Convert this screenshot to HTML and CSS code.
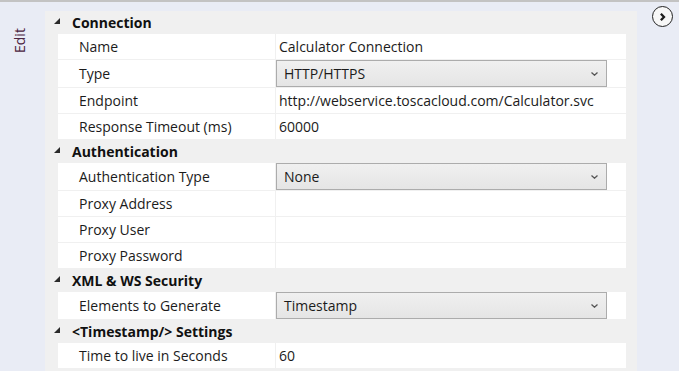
FILE: index.html
```html
<!DOCTYPE html>
<html lang="en">

<head>
  <meta charset="UTF-8">
  <meta name="viewport" content="width=device-width, initial-scale=1.0">
  <title>Edit - Calculator Connection</title>
  <link rel="stylesheet" href="styles.css">
</head>

<body>
  <div class="shell">
    <aside class="side-tab">
      <span class="side-label">Edit</span>
    </aside>

    <main class="grid-panel">
      <section class="group">
        <div class="group-head"><svg class="caret" viewBox="0 0 6 6"><polygon points="6,0 6,6 0,6" /></svg>Connection</div>
        <div class="prop">
          <div class="prop-name">Name</div>
          <div class="prop-value">Calculator Connection</div>
        </div>
        <div class="prop prop-combo">
          <div class="prop-name">Type</div>
          <div class="prop-value">
            <div class="combo">HTTP/HTTPS<svg class="chev" viewBox="0 0 7 4"><polyline points="0.5,0.5 3.5,3.2 6.5,0.5" /></svg></div>
          </div>
        </div>
        <div class="prop">
          <div class="prop-name">Endpoint</div>
          <div class="prop-value">http://webservice.toscacloud.com/Calculator.svc</div>
        </div>
        <div class="prop">
          <div class="prop-name">Response Timeout (ms)</div>
          <div class="prop-value">60000</div>
        </div>
      </section>

      <section class="group">
        <div class="group-head"><svg class="caret" viewBox="0 0 6 6"><polygon points="6,0 6,6 0,6" /></svg>Authentication</div>
        <div class="prop prop-combo">
          <div class="prop-name">Authentication Type</div>
          <div class="prop-value">
            <div class="combo">None<svg class="chev" viewBox="0 0 7 4"><polyline points="0.5,0.5 3.5,3.2 6.5,0.5" /></svg></div>
          </div>
        </div>
        <div class="prop">
          <div class="prop-name">Proxy Address</div>
          <div class="prop-value"></div>
        </div>
        <div class="prop">
          <div class="prop-name">Proxy User</div>
          <div class="prop-value"></div>
        </div>
        <div class="prop">
          <div class="prop-name">Proxy Password</div>
          <div class="prop-value"></div>
        </div>
      </section>

      <section class="group">
        <div class="group-head"><svg class="caret" viewBox="0 0 6 6"><polygon points="6,0 6,6 0,6" /></svg>XML &amp; WS Security</div>
        <div class="prop prop-combo">
          <div class="prop-name">Elements to Generate</div>
          <div class="prop-value">
            <div class="combo">Timestamp<svg class="chev" viewBox="0 0 7 4"><polyline points="0.5,0.5 3.5,3.2 6.5,0.5" /></svg></div>
          </div>
        </div>
      </section>

      <section class="group">
        <div class="group-head"><svg class="caret" viewBox="0 0 6 6"><polygon points="6,0 6,6 0,6" /></svg>&lt;Timestamp/&gt; Settings</div>
        <div class="prop">
          <div class="prop-name">Time to live in Seconds</div>
          <div class="prop-value">60</div>
        </div>
      </section>
    </main>

    <aside class="right-rail">
      <button class="collapse-btn" type="button">
        <svg viewBox="0 0 20 20"><polyline points="8.3,6.5 11.6,10 8.3,13.5" /></svg>
      </button>
    </aside>
  </div>
</body>

</html>
```

FILE: styles.css
```css
html,
body {
  margin: 0;
  height: 100%;
}

body {
  font-family: 'Open Sans', 'Noto Sans', sans-serif;
  font-size: 14px;
  color: #1b1b1b;
  background-color: #e9ecf5;
  overflow: hidden;
}

.shell {
  display: flex;
  height: 100%;
  box-sizing: border-box;
  border-top: 2px solid #c3c3c3;
}

/* left vertical tab */
.side-tab {
  width: 45px;
  flex-shrink: 0;
  display: flex;
  justify-content: center;
  padding-top: 21px;
  padding-right: 6px;
  box-sizing: border-box;
}

.side-label {
  writing-mode: vertical-rl;
  transform: rotate(180deg);
  color: #4b2440;
  font-size: 14px;
  height: 30px;
}

/* property grid */
.grid-panel {
  width: 592px;
  flex-shrink: 0;
  margin-top: 9px;
  padding-right: 11px;
  box-sizing: border-box;
  background-color: #f0f0f0;
}

.group-head {
  height: 23px;
  display: flex;
  align-items: center;
  padding-left: 9px;
  font-weight: 700;
  color: #111;
}

.caret {
  width: 6px;
  height: 6px;
  margin-right: 12px;
  margin-top: -3px;
  fill: #2a2a2a;
}

.prop {
  display: grid;
  grid-template-columns: 217px 1fr;
  column-gap: 1px;
  height: 25px;
  margin-left: 13px;
  margin-bottom: 1px;
}

.prop-combo {
  height: 27px;
}

.prop-name,
.prop-value {
  background-color: #fff;
  display: flex;
  align-items: center;
  white-space: nowrap;
}

.prop-name {
  padding-left: 21px;
}

.prop-value {
  padding-left: 3px;
}

.prop-combo .prop-value {
  padding-left: 0;
  align-items: stretch;
}

.combo {
  width: 331px;
  box-sizing: border-box;
  display: flex;
  align-items: center;
  justify-content: space-between;
  padding: 0 8px 0 7px;
  border: 1px solid #acacac;
  background: linear-gradient(#f0f0f0, #e5e5e5);
}

.chev {
  width: 7px;
  height: 4px;
  fill: none;
  stroke: #555;
  stroke-width: 1.3;
}

/* right rail */
.right-rail {
  flex: 1;
  display: flex;
  justify-content: flex-end;
  padding: 4px 6px 0 0;
}

.collapse-btn {
  width: 21px;
  height: 21px;
  padding: 0;
  border: 1.6px solid #222;
  border-radius: 50%;
  background-color: #f7f7f7;
  display: flex;
  align-items: center;
  justify-content: center;
  cursor: pointer;
}

.collapse-btn svg {
  width: 20px;
  height: 20px;
  fill: none;
  stroke: #1d1d1d;
  stroke-width: 2.4;
}
```
